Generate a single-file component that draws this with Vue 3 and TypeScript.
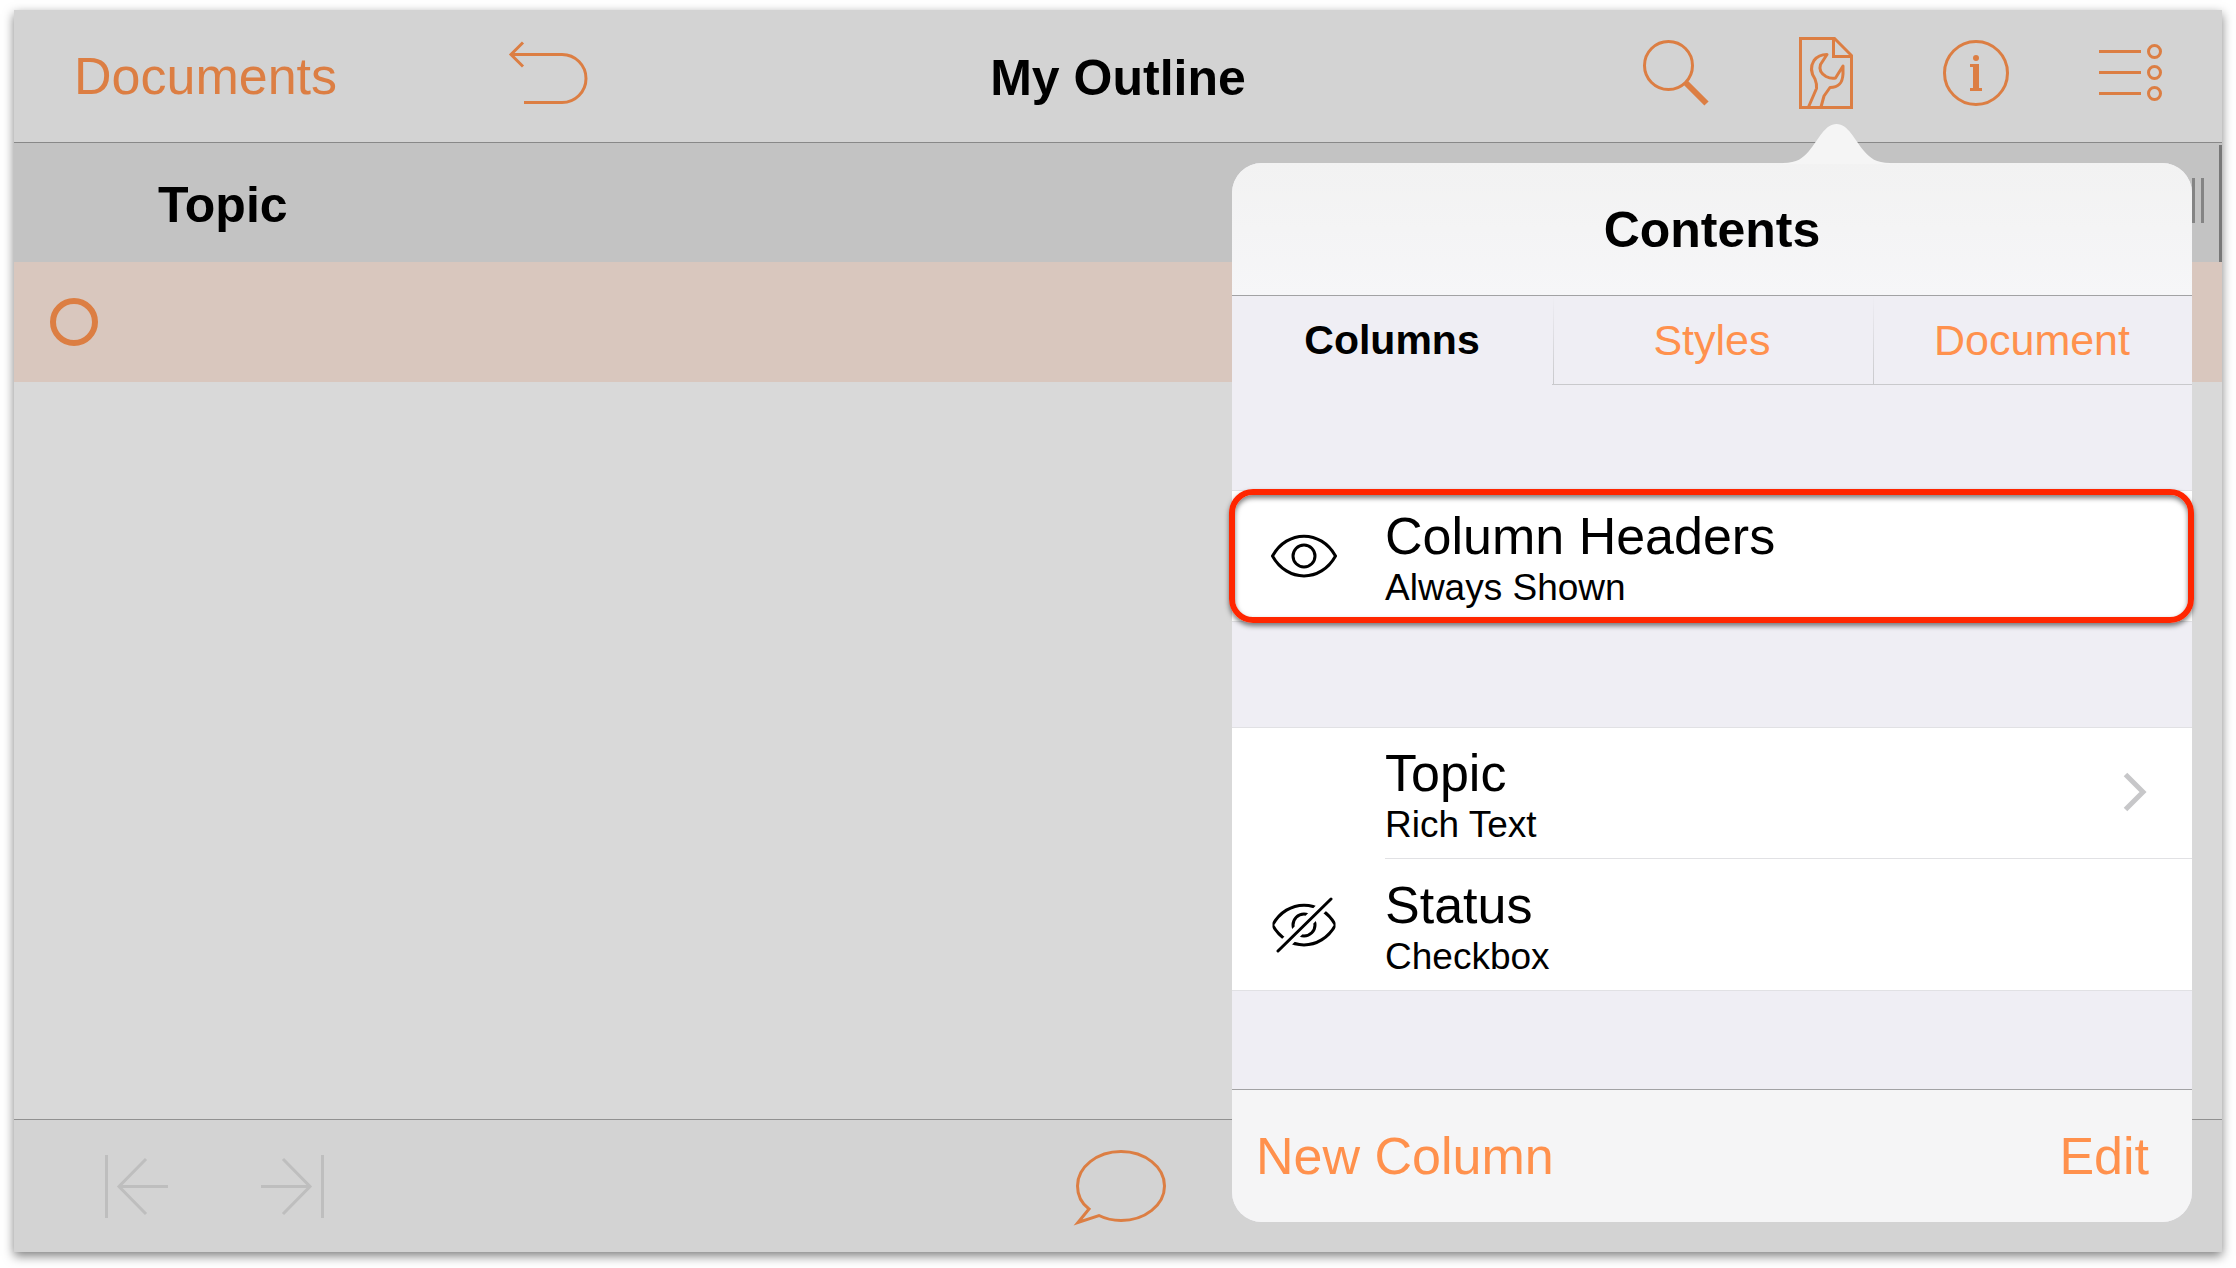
<script setup lang="ts">
import { ref } from 'vue'

interface Column {
  name: string
  kind: string
  hidden: boolean
  detail: boolean
}

const tabs: string[] = ['Columns', 'Styles', 'Document']
const activeTab = ref<string>('Columns')

const columns: Column[] = [
  { name: 'Topic', kind: 'Rich Text', hidden: false, detail: true },
  { name: 'Status', kind: 'Checkbox', hidden: true, detail: false },
]
</script>

<template>
  <div class="page">
    <div class="window">
      <header class="navbar">
        <div class="nav-left">
          <button class="text-button dim" type="button">Documents</button>
          <button class="icon-button" type="button" aria-label="Undo">
            <svg width="80" height="66" viewBox="0 0 80 66">
              <path d="M3 14.5H54a24 24 0 0 1 0 48H16M15 2.5L3 14.5l12 12" />
            </svg>
          </button>
        </div>
        <h1 class="title">My Outline</h1>
        <div class="nav-right">
          <button class="icon-button" type="button" aria-label="Search">
            <svg width="66" height="66" viewBox="0 0 66 66">
              <circle cx="25.5" cy="25.5" r="24" />
              <path class="thick" d="M43 43L63.5 63.5" />
            </svg>
          </button>
          <button class="icon-button" type="button" aria-label="Contents">
            <svg width="54" height="72" viewBox="0 0 54 72">
              <path d="M1.5 1.5H35.5L52.5 18.5V70.5H1.5Z" />
              <path d="M34.5 1.5V19.5H52.5" />
              <path
                d="M9.5 70L17.5 51.5Q18 47 16 42C12 36 11.5 29 15 23.5C18 19.5 22 17.5 28 17.5L21.5 27.5C20 32 22 36.5 27 39.5Q32 42 36.5 41L44 29V37C43.5 46 40 50.5 31 50.5L25 59L22 70"
                stroke-linejoin="round"
              />
            </svg>
          </button>
          <button class="icon-button" type="button" aria-label="Inspector">
            <svg width="66" height="66" viewBox="0 0 66 66">
              <circle cx="33" cy="33" r="31.5" />
              <circle class="solid" cx="33" cy="18" r="3" />
              <path d="M27 25.5H33.5M27 49.5H39" />
              <path class="thick" d="M33 24V50" />
            </svg>
          </button>
          <button class="icon-button" type="button" aria-label="Batch editing">
            <svg width="63" height="58" viewBox="0 0 63 58">
              <path d="M0 7.5H42M0 28.5H42M0 49.5H42" />
              <circle cx="55.5" cy="7.5" r="6" />
              <circle cx="55.5" cy="28.5" r="6" />
              <circle cx="55.5" cy="49.5" r="6" />
            </svg>
          </button>
        </div>
      </header>

      <main class="outline">
        <div class="column-header">
          <h2>Topic</h2>
          <div class="grip"></div>
          <div class="edge"></div>
        </div>
        <div class="outline-row">
          <button class="handle" type="button" aria-label="Row handle"></button>
        </div>
      </main>

      <footer class="toolbar">
        <div class="indents">
          <button class="icon-button off" type="button" aria-label="Outdent" disabled>
            <svg width="63" height="63" viewBox="0 0 63 63">
              <path d="M1.5 0V63M63 31.5H14M41 4L14 31.5L41 59" />
            </svg>
          </button>
          <button class="icon-button off" type="button" aria-label="Indent" disabled>
            <svg width="63" height="63" viewBox="0 0 63 63">
              <path d="M61.5 0V63M0 31.5H49M22 4L49 31.5L22 59" />
            </svg>
          </button>
        </div>
        <button class="icon-button" type="button" aria-label="Note">
          <svg width="96" height="80" viewBox="0 0 96 80">
            <path
              d="M19 63C11 57 7.5 49 7.5 40C7.5 21 27 5.5 51 5.5S94.5 21 94.5 40S75 74.5 51 74.5C43 74.5 35 72.5 29 69.5L8 76.5Z"
            />
          </svg>
        </button>
      </footer>

      <section class="popover" aria-label="Contents">
        <svg class="arrow" width="107" height="40" viewBox="0 0 107 40">
          <path
            d="M0 40V39C14 39 20 34 26 27C36 15 42 0 53.5 0S71 15 81 27C87 34 93 39 107 39V40Z"
          />
        </svg>
        <header class="popover-title"><h2>Contents</h2></header>
        <div class="tabs" role="tablist">
          <button
            v-for="tab in tabs"
            :key="tab"
            class="tab"
            :class="{ active: tab === activeTab }"
            type="button"
            role="tab"
            :aria-selected="tab === activeTab"
            @click="activeTab = tab"
          >
            {{ tab }}
          </button>
        </div>
        <div class="groups">
          <div class="group highlighted">
            <button class="item" type="button">
              <span class="eye">
                <svg width="66" height="56" viewBox="0 0 66 56">
                  <path d="M1.5 28C16 1.5 50 1.5 64.5 28C50 54.5 16 54.5 1.5 28Z" />
                  <circle cx="33" cy="28" r="11" />
                </svg>
              </span>
              <span class="labels">
                <span class="name">Column Headers</span>
                <span class="kind">Always Shown</span>
              </span>
            </button>
          </div>
          <div class="group">
            <button v-for="column in columns" :key="column.name" class="item" type="button">
              <span class="eye">
                <svg v-if="column.hidden" width="66" height="56" viewBox="0 0 66 56">
                  <mask id="slash-gap">
                    <rect width="66" height="56" fill="#fff" />
                    <path class="gap" d="M-2 62.5L68 -6.5" />
                  </mask>
                  <g mask="url(#slash-gap)">
                    <path d="M1.5 28C16 1.5 50 1.5 64.5 28C50 54.5 16 54.5 1.5 28Z" />
                    <circle cx="33" cy="28" r="11" />
                  </g>
                  <path d="M7 54L60 2" stroke-linecap="round" />
                </svg>
              </span>
              <span class="labels">
                <span class="name">{{ column.name }}</span>
                <span class="kind">{{ column.kind }}</span>
              </span>
              <svg v-if="column.detail" class="chevron" width="24" height="40" viewBox="0 0 24 40">
                <path d="M2.5 2.5L20 20L2.5 37.5" />
              </svg>
            </button>
          </div>
        </div>
        <footer class="popover-actions">
          <button class="text-button" type="button">New Column</button>
          <button class="text-button" type="button">Edit</button>
        </footer>
      </section>
    </div>
  </div>
</template>

<style>
body {
  margin: 0;
  background: #fff;
}
</style>

<style scoped>
.page {
  box-sizing: border-box;
  display: flex;
  min-height: 100vh;
  padding: 10px 14px 16px;
  font-family: 'Liberation Sans', Arial, sans-serif;
  color: #000;
}

button {
  margin: 0;
  padding: 0;
  border: 0;
  background: none;
  font: inherit;
  color: inherit;
  text-align: left;
}

h1,
h2 {
  margin: 0;
  font-size: 50px;
  line-height: 60px;
  font-weight: 700;
}

svg {
  display: block;
  fill: none;
  stroke: currentColor;
  stroke-width: 3px;
}

.thick {
  stroke-width: 6px;
}

.gap {
  stroke: #000;
  stroke-width: 11px;
}

.window {
  position: relative;
  display: flex;
  flex: 1;
  flex-direction: column;
  background: #d9d9d9;
  box-shadow: 0 4px 10px rgba(0, 0, 0, 0.5);
}

.navbar {
  display: grid;
  grid-template-columns: 1fr auto 1fr;
  align-items: center;
  height: 132px;
  padding: 0 60px;
  border-bottom: 1px solid #888;
  background: #d3d3d3;
}

.title {
  padding-top: 4px;
}

.nav-left,
.nav-right {
  display: flex;
  align-items: center;
}

.nav-left {
  gap: 171px;
}

.nav-right {
  justify-content: flex-end;
  gap: 90px;
}

.navbar .icon-button {
  margin-bottom: 6px;
}

.icon-button {
  color: #dc7e43;
}

.icon-button.off {
  color: #bebebe;
}

.solid {
  fill: currentColor;
  stroke: none;
}

.text-button {
  font-size: 52px;
  line-height: 60px;
  color: #ff914d;
}

.text-button.dim {
  color: #dc7e43;
}

.outline {
  flex: 1;
}

.column-header {
  display: flex;
  align-items: center;
  height: 119px;
  padding-left: 144px;
  background: #c3c3c3;
}

.column-header h2 {
  flex: 1;
  padding-top: 4px;
}

.grip {
  width: 6px;
  height: 45px;
  margin: 0 15px 4px 0;
  border: solid #848484;
  border-width: 0 3px;
}

.edge {
  align-self: stretch;
  width: 3px;
  margin-top: 2px;
  background: #777;
}

.outline-row {
  display: flex;
  align-items: center;
  height: 120px;
  padding-left: 36px;
  background: #d9c7be;
}

.handle {
  box-sizing: border-box;
  width: 48px;
  height: 48px;
  border: 6px solid #dc7e43;
  border-radius: 50%;
}

.toolbar {
  display: grid;
  grid-template-columns: 1fr auto 1fr;
  align-items: center;
  height: 132px;
  border-top: 1px solid #919191;
  background: #d3d3d3;
}

.indents {
  display: flex;
  gap: 93px;
  padding-left: 91px;
}

.popover {
  position: absolute;
  top: 153px;
  right: 30px;
  bottom: 30px;
  display: flex;
  flex-direction: column;
  width: 960px;
  border-radius: 30px;
  background: #efeef4;
}

.arrow {
  position: absolute;
  right: 302px;
  bottom: calc(100% - 1px);
  fill: #f5f5f5;
  stroke: none;
}

.popover-title {
  display: flex;
  align-items: center;
  justify-content: center;
  height: 132px;
  border-bottom: 1px solid #a2a2a4;
  border-radius: 30px 30px 0 0;
  background: linear-gradient(#f2f2f2, #f6f6f8);
}

.popover-title h2 {
  padding-top: 2px;
}

.tabs {
  display: grid;
  grid-template-columns: repeat(3, 1fr);
}

.tab {
  height: 89px;
  border-bottom: 1px solid #c9c9cc;
  background: linear-gradient(#efeef4, #c9c9cc) 1px 0 / 1px 100% no-repeat;
  font-size: 43px;
  line-height: 48px;
  text-align: center;
  color: #ff914d;
}

.tab.active {
  border-color: transparent;
  background: none;
  font-size: 41px;
  font-weight: 700;
  color: #000;
}

.groups {
  display: flex;
  flex: 1;
  flex-direction: column;
  gap: 105px;
  padding-top: 105px;
}

.group {
  position: relative;
  border: solid #e1e1e4;
  border-width: 1px 0;
  background: #fff;
}

.highlighted::after {
  content: '';
  position: absolute;
  inset: -2px -2px -2px -3px;
  border: 6px solid #ff2600;
  border-radius: 24px;
  box-shadow:
    0 3px 5px rgba(0, 0, 0, 0.5),
    inset 0 3px 5px rgba(0, 0, 0, 0.5);
  pointer-events: none;
}

.item {
  display: flex;
  align-items: center;
  width: 100%;
  padding-left: 39px;
  background: linear-gradient(#e1e1e4, #e1e1e4) 153px 0 / 100% 1px no-repeat;
}

.item:first-child {
  background: none;
}

.item + .item {
  padding-top: 2px;
}

.eye {
  width: 66px;
  margin-right: 48px;
}

.labels {
  display: flex;
  flex: 1;
  flex-direction: column;
  padding: 15px 0 11px;
}

.name {
  font-size: 52px;
  line-height: 60px;
}

.kind {
  font-size: 37px;
  line-height: 44px;
}

.chevron {
  margin: 0 45px 2px 0;
  color: #c7c7c9;
  stroke-width: 5px;
}

.popover-actions {
  display: flex;
  align-items: center;
  justify-content: space-between;
  height: 132px;
  padding: 0 43px 0 24px;
  border-top: 1px solid #a2a2a4;
  border-radius: 0 0 30px 30px;
  background: #f5f5f6;
}
</style>
